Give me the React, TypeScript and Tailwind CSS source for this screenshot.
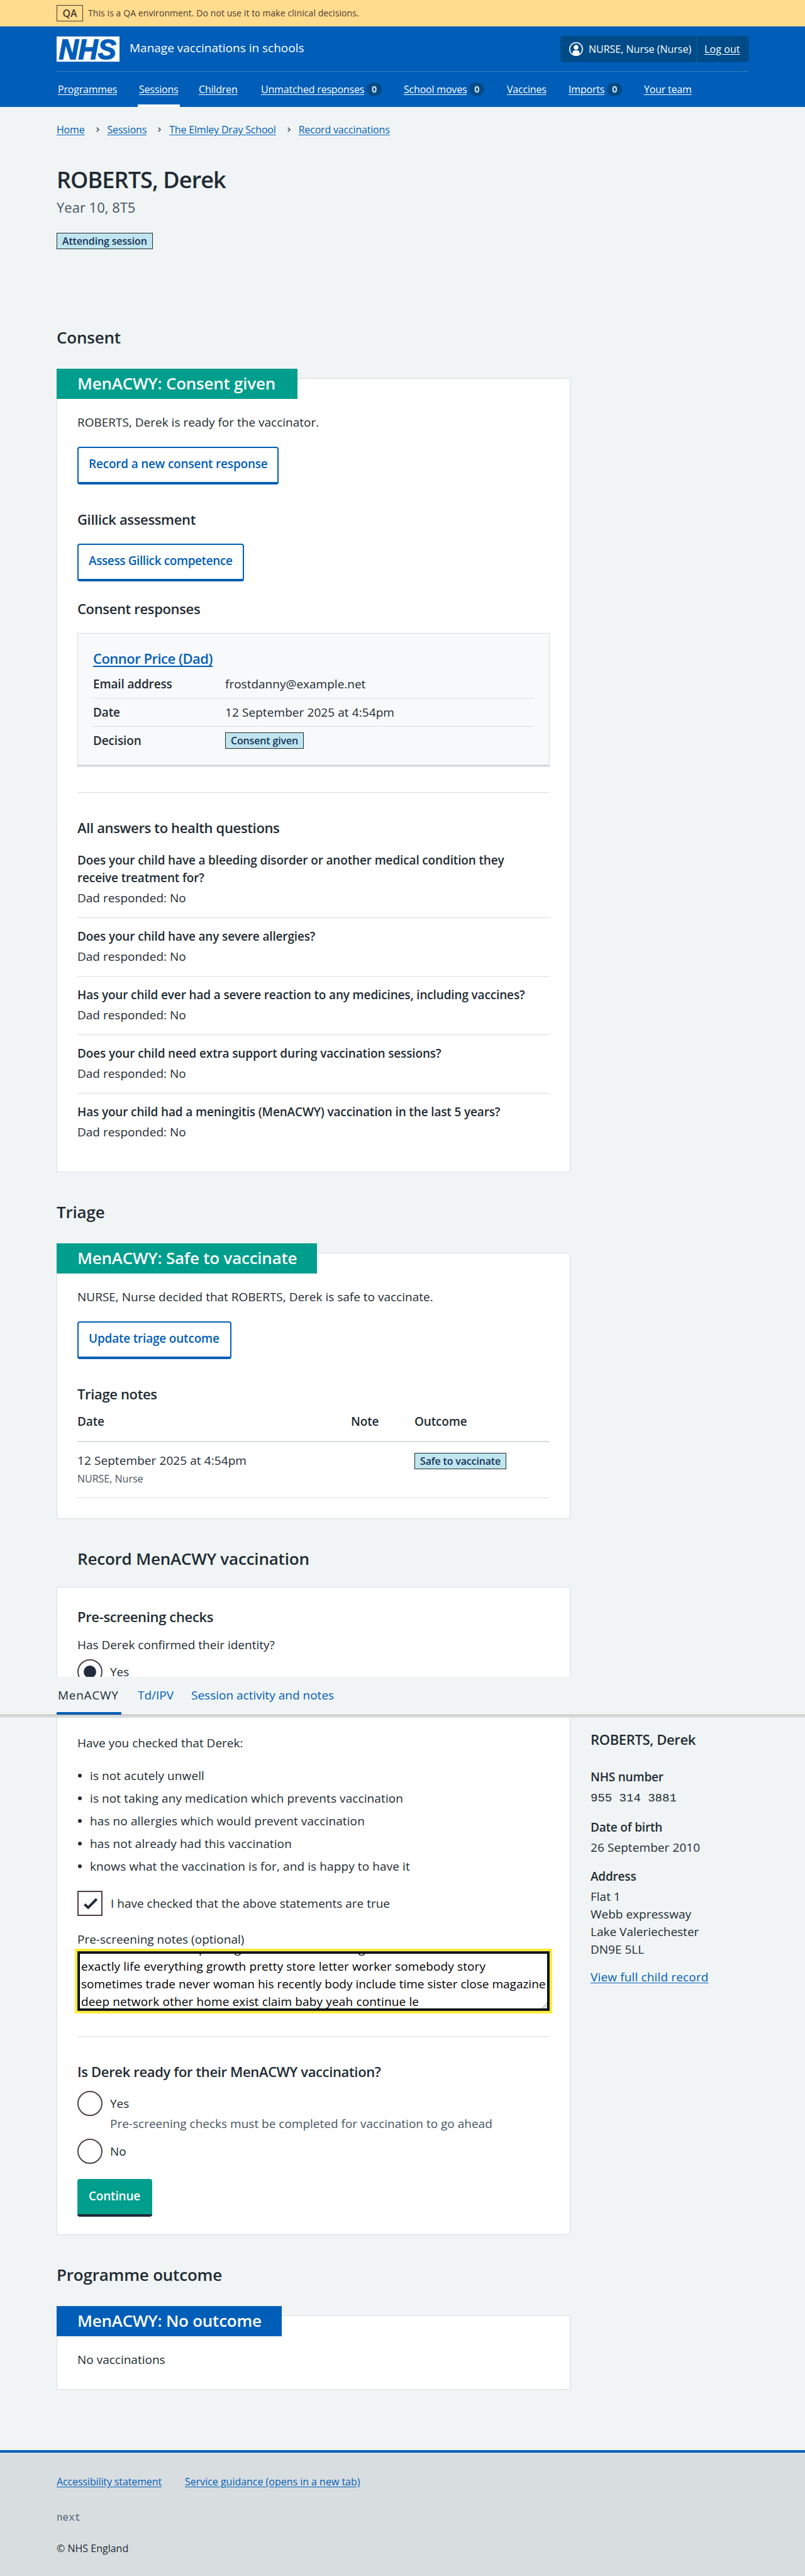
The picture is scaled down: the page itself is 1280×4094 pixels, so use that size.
import type { ReactNode } from "react";

const navItems = [
  { label: "Programmes", width: "w-[129px]" },
  { label: "Sessions", width: "w-[95px]", active: true },
  { label: "Children", width: "w-[99px]" },
  { label: "Unmatched responses", width: "w-[227px]", count: 0 },
  { label: "School moves", width: "w-[164px]", count: 0 },
  { label: "Vaccines", width: "w-[98px]" },
  { label: "Imports", width: "w-[120px]", count: 0 },
  { label: "Your team", width: "w-[90px]" },
];

const crumbs = ["Home", "Sessions", "The Elmley Dray School", "Record vaccinations"];

const questions = [
  "Does your child have a bleeding disorder or another medical condition they receive treatment for?",
  "Does your child have any severe allergies?",
  "Has your child ever had a severe reaction to any medicines, including vaccines?",
  "Does your child need extra support during vaccination sessions?",
  "Has your child had a meningitis (MenACWY) vaccination in the last 5 years?",
];

const checks = [
  "is not acutely unwell",
  "is not taking any medication which prevents vaccination",
  "has no allergies which would prevent vaccination",
  "has not already had this vaccination",
  "knows what the vaccination is for, and is happy to have it",
];

function Tag({ children, className = "" }: { children: ReactNode; className?: string }) {
  return (
    <span
      className={`flex h-[26px] w-fit items-center whitespace-nowrap border border-[#212b32] bg-[#c0e5ee] px-2 text-[16px] leading-6 font-semibold tracking-[-0.15px] text-[#16325a] ${className}`}
    >
      {children}
    </span>
  );
}

function OutlineButton({ children, className }: { children: ReactNode; className: string }) {
  return (
    <button
      className={`block h-[60px] whitespace-nowrap rounded-[4px] border-2 border-b-4 border-[#005eb8] bg-white px-4 pb-[5px] text-left text-[19px] leading-7 font-semibold text-[#005eb8] ${className}`}
    >
      {children}
    </button>
  );
}

function Heading({ children, className }: { children: ReactNode; className: string }) {
  return <h2 className={`text-[26px] leading-8 font-semibold tracking-[-0.2px] ${className}`}>{children}</h2>;
}

function SubHeading({ children, className }: { children: ReactNode; className: string }) {
  return <h3 className={`text-[22px] leading-[30px] font-semibold tracking-[-0.35px] ${className}`}>{children}</h3>;
}

function FeatureCard({ title, tab, className, children }: { title: string; tab: string; className: string; children: ReactNode }) {
  return (
    <section className={`mt-[49px] border border-[#d8dde0] bg-white px-8 ${className}`}>
      <h3
        className={`-mt-4 -ml-[33px] h-12 whitespace-nowrap pl-[33px] text-[26px] leading-[46px] font-semibold tracking-[-0.23px] text-white ${tab}`}
      >
        {title}
      </h3>
      {children}
    </section>
  );
}

function Radio({ label, checked, className }: { label: string; checked?: boolean; className: string }) {
  return (
    <div className={`flex h-10 items-center gap-3 ${className}`}>
      <span className="flex size-10 items-center justify-center rounded-full border-2 border-[#4c4446]">
        {checked && <span className="size-5 rounded-full bg-[#212b3c]" />}
      </span>
      <span>{label}</span>
    </div>
  );
}

function Header() {
  return (
    <header className="h-32 bg-[#005eb8] px-[90px] text-white">
      <div className="flex h-[72px] items-center border-b border-[#3a7dbd]">
        <svg width="100" height="40" viewBox="0 0 100 40" className="shrink-0">
          <rect width="100" height="40" fill="#fff" />
          <text
            x="3.5"
            y="35.5"
            fontFamily="Liberation Sans, Arial, sans-serif"
            fontWeight="700"
            fontStyle="italic"
            fontSize="44.5"
            textLength="91"
            lengthAdjust="spacingAndGlyphs"
            fill="#005eb8"
            stroke="#005eb8"
            strokeWidth="1.6"
          >
            NHS
          </text>
        </svg>
        <span className="ml-[16px] pb-[3px] text-[19px] leading-7">Manage vaccinations in schools</span>
        <div className="-mr-px ml-auto flex h-[42px] w-[300px] rounded-[5px] bg-[#004b87] text-[16px] leading-6">
          <div className="my-px flex w-[217px] items-center gap-[9px] border-r border-[#005eb8] pl-3.5">
            <svg width="22" height="22" viewBox="0 0 22 22">
              <circle cx="11" cy="11" r="10.2" fill="none" stroke="#fff" strokeWidth="1.6" />
              <circle cx="11" cy="8.3" r="3.7" fill="#fff" />
              <path d="M5.6 19.5v-2.6a4 4 0 0 1 4-4h2.8a4 4 0 0 1 4 4v2.6a10 10 0 0 1-10.8 0z" fill="#fff" />
            </svg>
            <span className="whitespace-nowrap">NURSE, Nurse (Nurse)</span>
          </div>
          <a className="flex items-center pl-3 tracking-[0.1px] underline underline-offset-2">Log out</a>
        </div>
      </div>
      <nav className="flex h-14 pl-0.5 text-[16px] leading-6">
        {navItems.map((item) => (
          <div key={item.label} className={`flex shrink-0 ${item.width}`}>
            <div
              className={`flex items-center gap-1 whitespace-nowrap ${
                item.active ? "-mx-0.5 border-b-4 border-white px-0.5 pt-1" : ""
              }`}
            >
              <a className="tracking-[-0.2px] underline underline-offset-2">{item.label}</a>
              {item.count !== undefined && (
                <span className="flex h-[22px] w-6 items-center justify-center rounded-full bg-[#004b87] text-[14px] leading-5 font-semibold">
                  {item.count}
                </span>
              )}
            </div>
          </div>
        ))}
      </nav>
    </header>
  );
}

function ConsentSection() {
  return (
    <>
      <Heading className="">Consent</Heading>
      <FeatureCard title="MenACWY: Consent given" tab="w-[383px] bg-[#009e8c]" className="pb-[49px]">
        <p className="mt-[23px]">ROBERTS, Derek is ready for the vaccinator.</p>
        <OutlineButton className="mt-[25px] w-[320px] tracking-[-0.2px]">Record a new consent response</OutlineButton>
        <SubHeading className="mt-10">Gillick assessment</SubHeading>
        <OutlineButton className="mt-6 w-[265px] tracking-[-0.4px]">Assess Gillick competence</OutlineButton>
        <SubHeading className="mt-7">Consent responses</SubHeading>
        <div className="mt-6 h-[213px] border border-b-4 border-[#d8dde0] bg-[#f8f9fb] px-6 pt-6">
          <SubHeading className="text-[#005eb8]">
            <a className="tracking-[-0.5px] underline decoration-2 underline-offset-[3px]">Connor Price (Dad)</a>
          </SubHeading>
          <dl className="mt-1">
            <div className="flex border-b border-[#d8dde0] py-2">
              <dt className="w-[210px] font-semibold tracking-[-0.15px]">Email address</dt>
              <dd>frostdanny@example.net</dd>
            </div>
            <div className="flex border-b border-[#d8dde0] py-2">
              <dt className="w-[210px] font-semibold tracking-[-0.15px]">Date</dt>
              <dd className="tracking-[0.08px]">12 September 2025 at 4:54pm</dd>
            </div>
            <div className="flex pt-2">
              <dt className="w-[210px] font-semibold tracking-[-0.15px]">Decision</dt>
              <dd>
                <Tag className="mt-px">Consent given</Tag>
              </dd>
            </div>
          </dl>
        </div>
        <hr className="mt-10 border-[#d8dde0]" />
        <SubHeading className="mt-10">All answers to health questions</SubHeading>
        <dl className="mt-2">
          {questions.map((q, i) => (
            <div key={q} className={`pt-[15px] ${i < questions.length - 1 ? "border-b border-[#d8dde0] pb-[17px]" : ""}`}>
              <dt className="max-w-[720px] font-semibold tracking-[-0.15px]">{q}</dt>
              <dd className="mt-1">Dad responded: No</dd>
            </div>
          ))}
        </dl>
      </FeatureCard>
    </>
  );
}

function TriageSection() {
  return (
    <>
      <Heading className="mt-[47px]">Triage</Heading>
      <FeatureCard title="MenACWY: Safe to vaccinate" tab="w-[414px] bg-[#009e8c]" className="pb-8">
        <p className="mt-[23px]">NURSE, Nurse decided that ROBERTS, Derek is safe to vaccinate.</p>
        <OutlineButton className="mt-[25px] w-[245px] tracking-[-0.2px]">Update triage outcome</OutlineButton>
        <SubHeading className="mt-10">Triage notes</SubHeading>
        <div className="mt-[15px] grid grid-cols-[435px_101px_1fr] border-b-2 border-[#d8dde0] pb-[17px] font-semibold tracking-[-0.15px]">
          <span>Date</span>
          <span>Note</span>
          <span>Outcome</span>
        </div>
        <div className="grid grid-cols-[435px_101px_1fr] border-b border-[#d8dde0] pt-[15px] pb-[18px]">
          <div>
            <p className="tracking-[0.08px]">12 September 2025 at 4:54pm</p>
            <p className="mt-[3px] text-[16px] leading-6 text-[#46555f]">NURSE, Nurse</p>
          </div>
          <span />
          <Tag className="mt-0.5">Safe to vaccinate</Tag>
        </div>
      </FeatureCard>
    </>
  );
}

function RecordSection() {
  return (
    <>
      <Heading className="mt-[47px] ml-[33px]">Record MenACWY vaccination</Heading>
      <section className="mt-[29px] border border-[#d8dde0] bg-white px-8 pt-[31px] pb-7">
        <SubHeading className="">Pre-screening checks</SubHeading>
        <p className="mt-4">Has Derek confirmed their identity?</p>
        <Radio label="Yes" checked className="mt-[9px]" />
        <p className="mt-[79px]">Have you checked that Derek:</p>
        <ul className="mt-6 flex flex-col gap-2 tracking-[0.1px]">
          {checks.map((c) => (
            <li key={c} className="flex items-center">
              <span className="mr-[13px] ml-px size-1.5 rounded-full bg-[#212b32]" />
              {c}
            </li>
          ))}
        </ul>
        <div className="mt-[25px] flex h-10 items-center gap-[13px]">
          <span className="flex size-10 items-center justify-center border-2 border-[#4c3f42]">
            <svg width="36" height="36" viewBox="0 0 36 36" fill="none" stroke="#212b3c" strokeWidth="4">
              <path d="M9.5 19.5l5.7 5.3L28.7 11" />
            </svg>
          </span>
          <span>I have checked that the above statements are true</span>
        </div>
        <p className="mt-[23px]">Pre-screening notes (optional)</p>
        <div className="relative mt-[5px] h-[95px] border-2 border-[#212b32] text-black ring-4 ring-[#ffeb3b]">
          <div className="h-[91px] overflow-hidden border-2 border-black bg-white pl-0.5">
            <div className="-mt-[22px] whitespace-nowrap">
              <p className="flex">
                <span className="w-[187px]">similar collection</span>
                <span className="w-[254px]">passing that former rate</span>
                <span>game</span>
              </p>
              <p className="tracking-[0.12px]">exactly life everything growth pretty store letter worker somebody story</p>
              <p>sometimes trade never woman his recently body include time sister close magazine</p>
              <p className="tracking-[0.15px]">deep network other home exist claim baby yeah continue le</p>
            </div>
          </div>
          <svg className="absolute right-0.5 bottom-0.5" width="9" height="9" viewBox="0 0 9 9" stroke="#777" strokeWidth="1">
            <path d="M1 9L9 1M5 9l4-4" />
          </svg>
        </div>
        <hr className="mt-10 border-[#d8dde0]" />
        <SubHeading className="mt-10">Is Derek ready for their MenACWY vaccination?</SubHeading>
        <Radio label="Yes" className="mt-4" />
        <p className="-mt-0.5 ml-[52px] text-[#46555f]">Pre-screening checks must be completed for vaccination to go ahead</p>
        <Radio label="No" className="mt-2.5" />
        <button className="mt-6 block h-[60px] w-[119px] rounded-[4px] border-b-4 border-[#212b3c] bg-[#009e8c] px-[18px] pb-[3px] text-left font-semibold tracking-[-0.2px] text-white">
          Continue
        </button>
      </section>
    </>
  );
}

function Sidebar() {
  return (
    <aside className="mt-[2229px] ml-8 w-[251px]">
      <SubHeading className="">ROBERTS, Derek</SubHeading>
      <dl className="mt-[31px]">
        <dt className="font-semibold tracking-[-0.2px]">NHS number</dt>
        <dd className="mt-1">
          <span className="font-['Liberation_Mono',monospace]">955 314 3881</span>
        </dd>
        <dt className="mt-[18px] font-semibold tracking-[-0.2px]">Date of birth</dt>
        <dd className="mt-1 tracking-[0.08px]">26 September 2010</dd>
        <dt className="mt-[18px] font-semibold tracking-[-0.2px]">Address</dt>
        <dd className="mt-1">
          Flat 1<br />
          Webb expressway
          <br />
          Lake Valeriechester
          <br />
          DN9E 5LL
        </dd>
      </dl>
      <a className="mt-4 block tracking-[0.15px] text-[#005eb8] underline underline-offset-2">View full child record</a>
    </aside>
  );
}

export default function App() {
  return (
    <div className="relative h-[4094px] w-[1280px] overflow-hidden bg-[#f0f4f5] font-['Open_Sans',sans-serif] text-[19px] leading-7 text-[#212b32]">
      <div className="flex h-[42px] items-center bg-[#ffdc8e] px-[90px] text-[#4d3a33]">
        <span className="flex h-[26px] w-[42px] items-center justify-center border border-[#4d3a33] text-[16px] leading-6 font-semibold">
          QA
        </span>
        <span className="ml-2 text-[14px] leading-5 tracking-[0.08px]">
          This is a QA environment. Do not use it to make clinical decisions.
        </span>
      </div>
      <Header />
      <div className="px-[90px]">
        <nav className="flex pt-6 text-[16px] leading-6">
          {crumbs.map((c, i) => (
            <span key={c} className="flex items-center">
              {i > 0 && (
                <svg className="mr-[13px] ml-[18px]" width="5" height="8" viewBox="0 0 5 8" fill="none" stroke="#425563" strokeWidth="1.6">
                  <path d="M.7.7L4 4 .7 7.3" />
                </svg>
              )}
              <a className="tracking-[-0.18px] text-[#005eb8] underline underline-offset-2">{c}</a>
            </span>
          ))}
        </nav>
        <h1 className="mt-[46px] text-[36px] leading-[44px] font-semibold tracking-[-0.9px]">ROBERTS, Derek</h1>
        <p className="mt-[5px] text-[22px] leading-8 text-[#46555f]">Year 10, 8T5</p>
        <Tag className="mt-[25px]">Attending session</Tag>
        <div className="mt-[124px] flex items-start">
          <main className="w-[817px]">
            <ConsentSection />
            <TriageSection />
            <RecordSection />
            <Heading className="mt-[47px]">Programme outcome</Heading>
            <FeatureCard title="MenACWY: No outcome" tab="w-[358px] bg-[#005eb8]" className="pb-[33px]">
              <p className="mt-[23px]">No vaccinations</p>
            </FeatureCard>
          </main>
          <Sidebar />
        </div>
      </div>
      <footer className="mt-24 h-[200px] border-t-4 border-[#005eb8] bg-[#d8dde0] px-[90px] pt-[34px] text-[16px] leading-6">
        <div className="flex gap-[37px] text-[#005eb8]">
          <a className="tracking-[-0.12px] underline underline-offset-2">Accessibility statement</a>
          <a className="tracking-[-0.02px] underline underline-offset-2">Service guidance (opens in a new tab)</a>
        </div>
        <p className="mt-[34px] font-['Liberation_Mono',monospace] text-[#4c6272]">next</p>
        <p className="mt-6">© NHS England</p>
      </footer>
      {/* Sticky session tabs, floating over the scrolled content */}
      <div className="absolute inset-x-0 top-[2665px] h-[65px] bg-[#f0f4f5]">
        <div className="flex h-[60px] px-[90px] whitespace-nowrap text-[#005eb8]">
          <div className="w-[126px]">
            <div className="h-[60px] w-[103px] border-b-4 border-[#005eb8] pt-[15px] pl-0.5 tracking-[0.7px] text-[#212b32]">MenACWY</div>
          </div>
          <span className="w-[85px] pt-[15px] pl-[3px]">Td/IPV</span>
          <span className="pt-[15px] pl-[3px]">Session activity and notes</span>
        </div>
        <div className="h-[5px] border-t border-[#bbaa9b] bg-[#d8dde0]" />
      </div>
    </div>
  );
}
